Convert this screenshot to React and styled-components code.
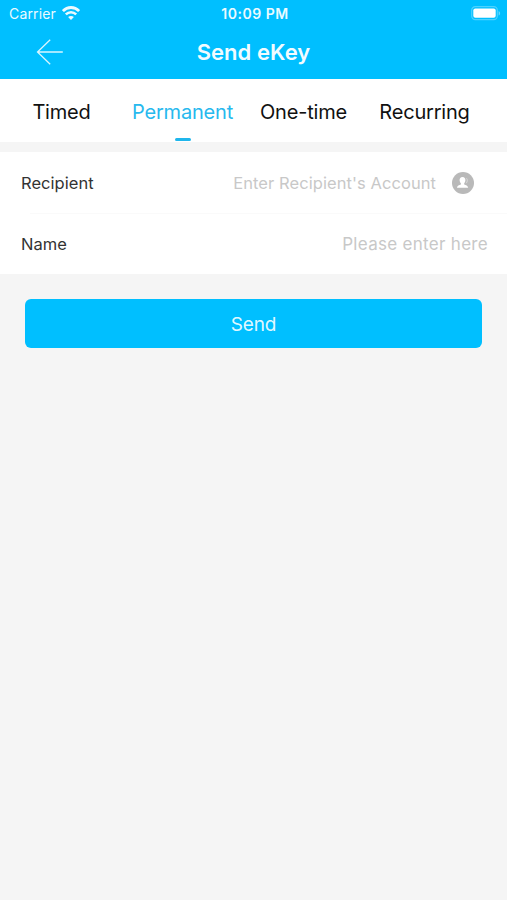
import React from 'react'
import styled, { createGlobalStyle } from 'styled-components'

const tabs = ['Timed', 'Permanent', 'One-time', 'Recurring']

const App = () => {
    return (
        <>
            <GlobalStyle />
            <Screen>
                <Header>
                    <StatusBar>
                        <Carrier>
                            <span>Carrier</span>
                            <WifiIcon />
                        </Carrier>
                        <Clock>10:09 PM</Clock>
                        <BatteryIcon />
                    </StatusBar>
                    <NavBar>
                        <BackButton aria-label="Back">
                            <BackIcon />
                        </BackButton>
                        <Title>Send eKey</Title>
                    </NavBar>
                </Header>
                <Tabs>
                    {tabs.map((tab) => (
                        <Tab key={tab} $active={tab === 'Permanent'}>
                            <span>{tab}</span>
                        </Tab>
                    ))}
                </Tabs>
                <Form>
                    <Row>
                        <Label>Recipient</Label>
                        <Placeholder $size="16.5px" $spacing="0.07px">Enter Recipient's Account</Placeholder>
                        <ContactButton aria-label="Contacts">
                            <ContactIcon />
                        </ContactButton>
                    </Row>
                    <Divider />
                    <Row>
                        <Label>Name</Label>
                        <Placeholder $size="17px" $spacing="0.3px">Please enter here</Placeholder>
                    </Row>
                </Form>
                <SendButton>Send</SendButton>
            </Screen>
        </>
    )
}

const WifiIcon = () => (
    <svg width="18" height="15" viewBox="0 0 18 15" fill="none" stroke="#fff">
        <path d="M0.9 5.1C5.4 0.3 12.6 0.3 17.1 5.1" strokeWidth="2.8" />
        <path d="M3.8 8.3C6.8 5.4 11.2 5.4 14.2 8.3" strokeWidth="2.5" />
        <path d="M9 14L6.1 11C7.7 9.6 10.3 9.6 11.9 11Z" fill="#fff" stroke="none" />
    </svg>
)

const BatteryIcon = () => (
    <svg width="30" height="15" viewBox="0 0 30 15">
        <rect x="0.7" y="0.7" width="25.6" height="13" rx="3.6" fill="none" stroke="#fff" strokeOpacity="0.3" strokeWidth="1.2" />
        <rect x="2.3" y="2.4" width="22.4" height="9.4" rx="2" fill="#fff" />
        <path d="M27.6 5V9.6C29.6 8.8 29.6 5.8 27.6 5Z" fill="#fff" fillOpacity="0.4" />
    </svg>
)

const BackIcon = () => (
    <svg width="28" height="26" viewBox="0 0 28 26" fill="none" stroke="#fff" strokeOpacity="0.85" strokeWidth="1.3">
        <path d="M14.2 0.8L1.5 13L14.2 25.2M1.5 13H26.8" />
    </svg>
)

const ContactIcon = () => (
    <svg width="22" height="22" viewBox="0 0 22 22">
        <circle cx="11" cy="11" r="11" fill="#b9b9b9" />
        <path
            d="M10.5 5C12.5 5 13.5 6.3 13.4 8.2C13.3 9.7 12.8 10.6 12.2 11.3V12.6C13.8 13.3 15.9 13.7 16.2 15.8H4.9C5.2 13.7 7.2 13.3 8.9 12.6V11.3C8.2 10.6 7.7 9.7 7.6 8.2C7.5 6.3 8.5 5 10.5 5Z"
            fill="#fff"
        />
        <path d="M14.5 6.2C15.6 7.5 15.5 9.5 14.3 11.2" fill="none" stroke="#fff" strokeOpacity="0.5" strokeWidth="0.9" />
    </svg>
)

export default App

const GlobalStyle = createGlobalStyle`
    * {
        box-sizing: border-box;
    }

    body {
        margin: 0;
        background-color: #f5f5f5;
        font-family: Inter, 'Liberation Sans', sans-serif;
    }

    svg {
        display: block;
    }

    button {
        padding: 0;
        border: 0;
        background: none;
        font-family: inherit;
    }
`

const Screen = styled.div`
    display: flex;
    flex-direction: column;
    min-height: 900px;
    background-color: #f5f5f5;
`

const Header = styled.header`
    height: 79px;
    color: white;
    background-color: #00bfff;
`

const StatusBar = styled.div`
    display: grid;
    grid-template-columns: 1fr auto 1fr;
    align-items: center;
    height: 27px;
    padding: 0 6px 0 9px;

    > svg {
        justify-self: end;
    }
`

const Carrier = styled.div`
    display: flex;
    align-items: center;
    gap: 6px;
    font-size: 14px;
    line-height: 27px;
    letter-spacing: 0.15px;
    opacity: 0.92;
`

const Clock = styled.div`
    font-size: 14px;
    font-weight: 600;
    line-height: 27px;
    letter-spacing: 0.5px;
    opacity: 0.92;
`

const NavBar = styled.div`
    display: grid;
    grid-template-columns: 100px 1fr 100px;
    align-items: center;
    height: 50px;
`

const BackButton = styled.button`
    padding-left: 36px;
`

const Title = styled.h1`
    margin: 0;
    font-size: 22px;
    font-weight: 600;
    line-height: 50px;
    letter-spacing: 0.05px;
    text-align: center;
    opacity: 0.95;
`

const Tabs = styled.nav`
    display: grid;
    grid-template-columns: repeat(4, 121px);
    height: 63px;
    padding-left: 1px;
    background-color: white;
`

const Tab = styled.div`
    display: flex;
    flex-direction: column;
    align-items: center;
    color: ${(props) => (props.$active ? '#27b9ee' : '#111')};
    font-size: 20px;
    line-height: 66px;
    letter-spacing: -0.2px;
    white-space: nowrap;

    &::after {
        content: '';
        width: 16px;
        height: 3px;
        margin-top: -7px;
        border-radius: 1.5px;
        background-color: ${(props) => (props.$active ? '#1fb6ec' : 'transparent')};
    }
`

const Form = styled.section`
    height: 122px;
    margin-top: 10px;
    background-color: white;
`

const Row = styled.div`
    display: flex;
    align-items: center;
    height: 61px;
    padding: 0 19px 0 21px;
    line-height: 24px;
`

const Label = styled.div`
    padding-top: 1px;
    color: #333;
    font-size: 16.5px;
    letter-spacing: 0.05px;
`

const Placeholder = styled.div`
    margin-left: auto;
    padding-top: 1px;
    color: #c8c8c8;
    font-size: ${(props) => props.$size};
    letter-spacing: ${(props) => props.$spacing};
`

const ContactButton = styled.button`
    margin: 0 14px 0 16px;
`

const Divider = styled.div`
    height: 1px;
    margin: 0 0 -1px 30px;
    background-color: #fafafa;
`

const SendButton = styled.button`
    height: 49px;
    margin: 25px 25px 0;
    padding-top: 2px;
    border-radius: 6px;
    color: rgba(255, 255, 255, 0.9);
    background-color: #00bfff;
    font-size: 19px;
    line-height: 47px;
    letter-spacing: -0.1px;
`
